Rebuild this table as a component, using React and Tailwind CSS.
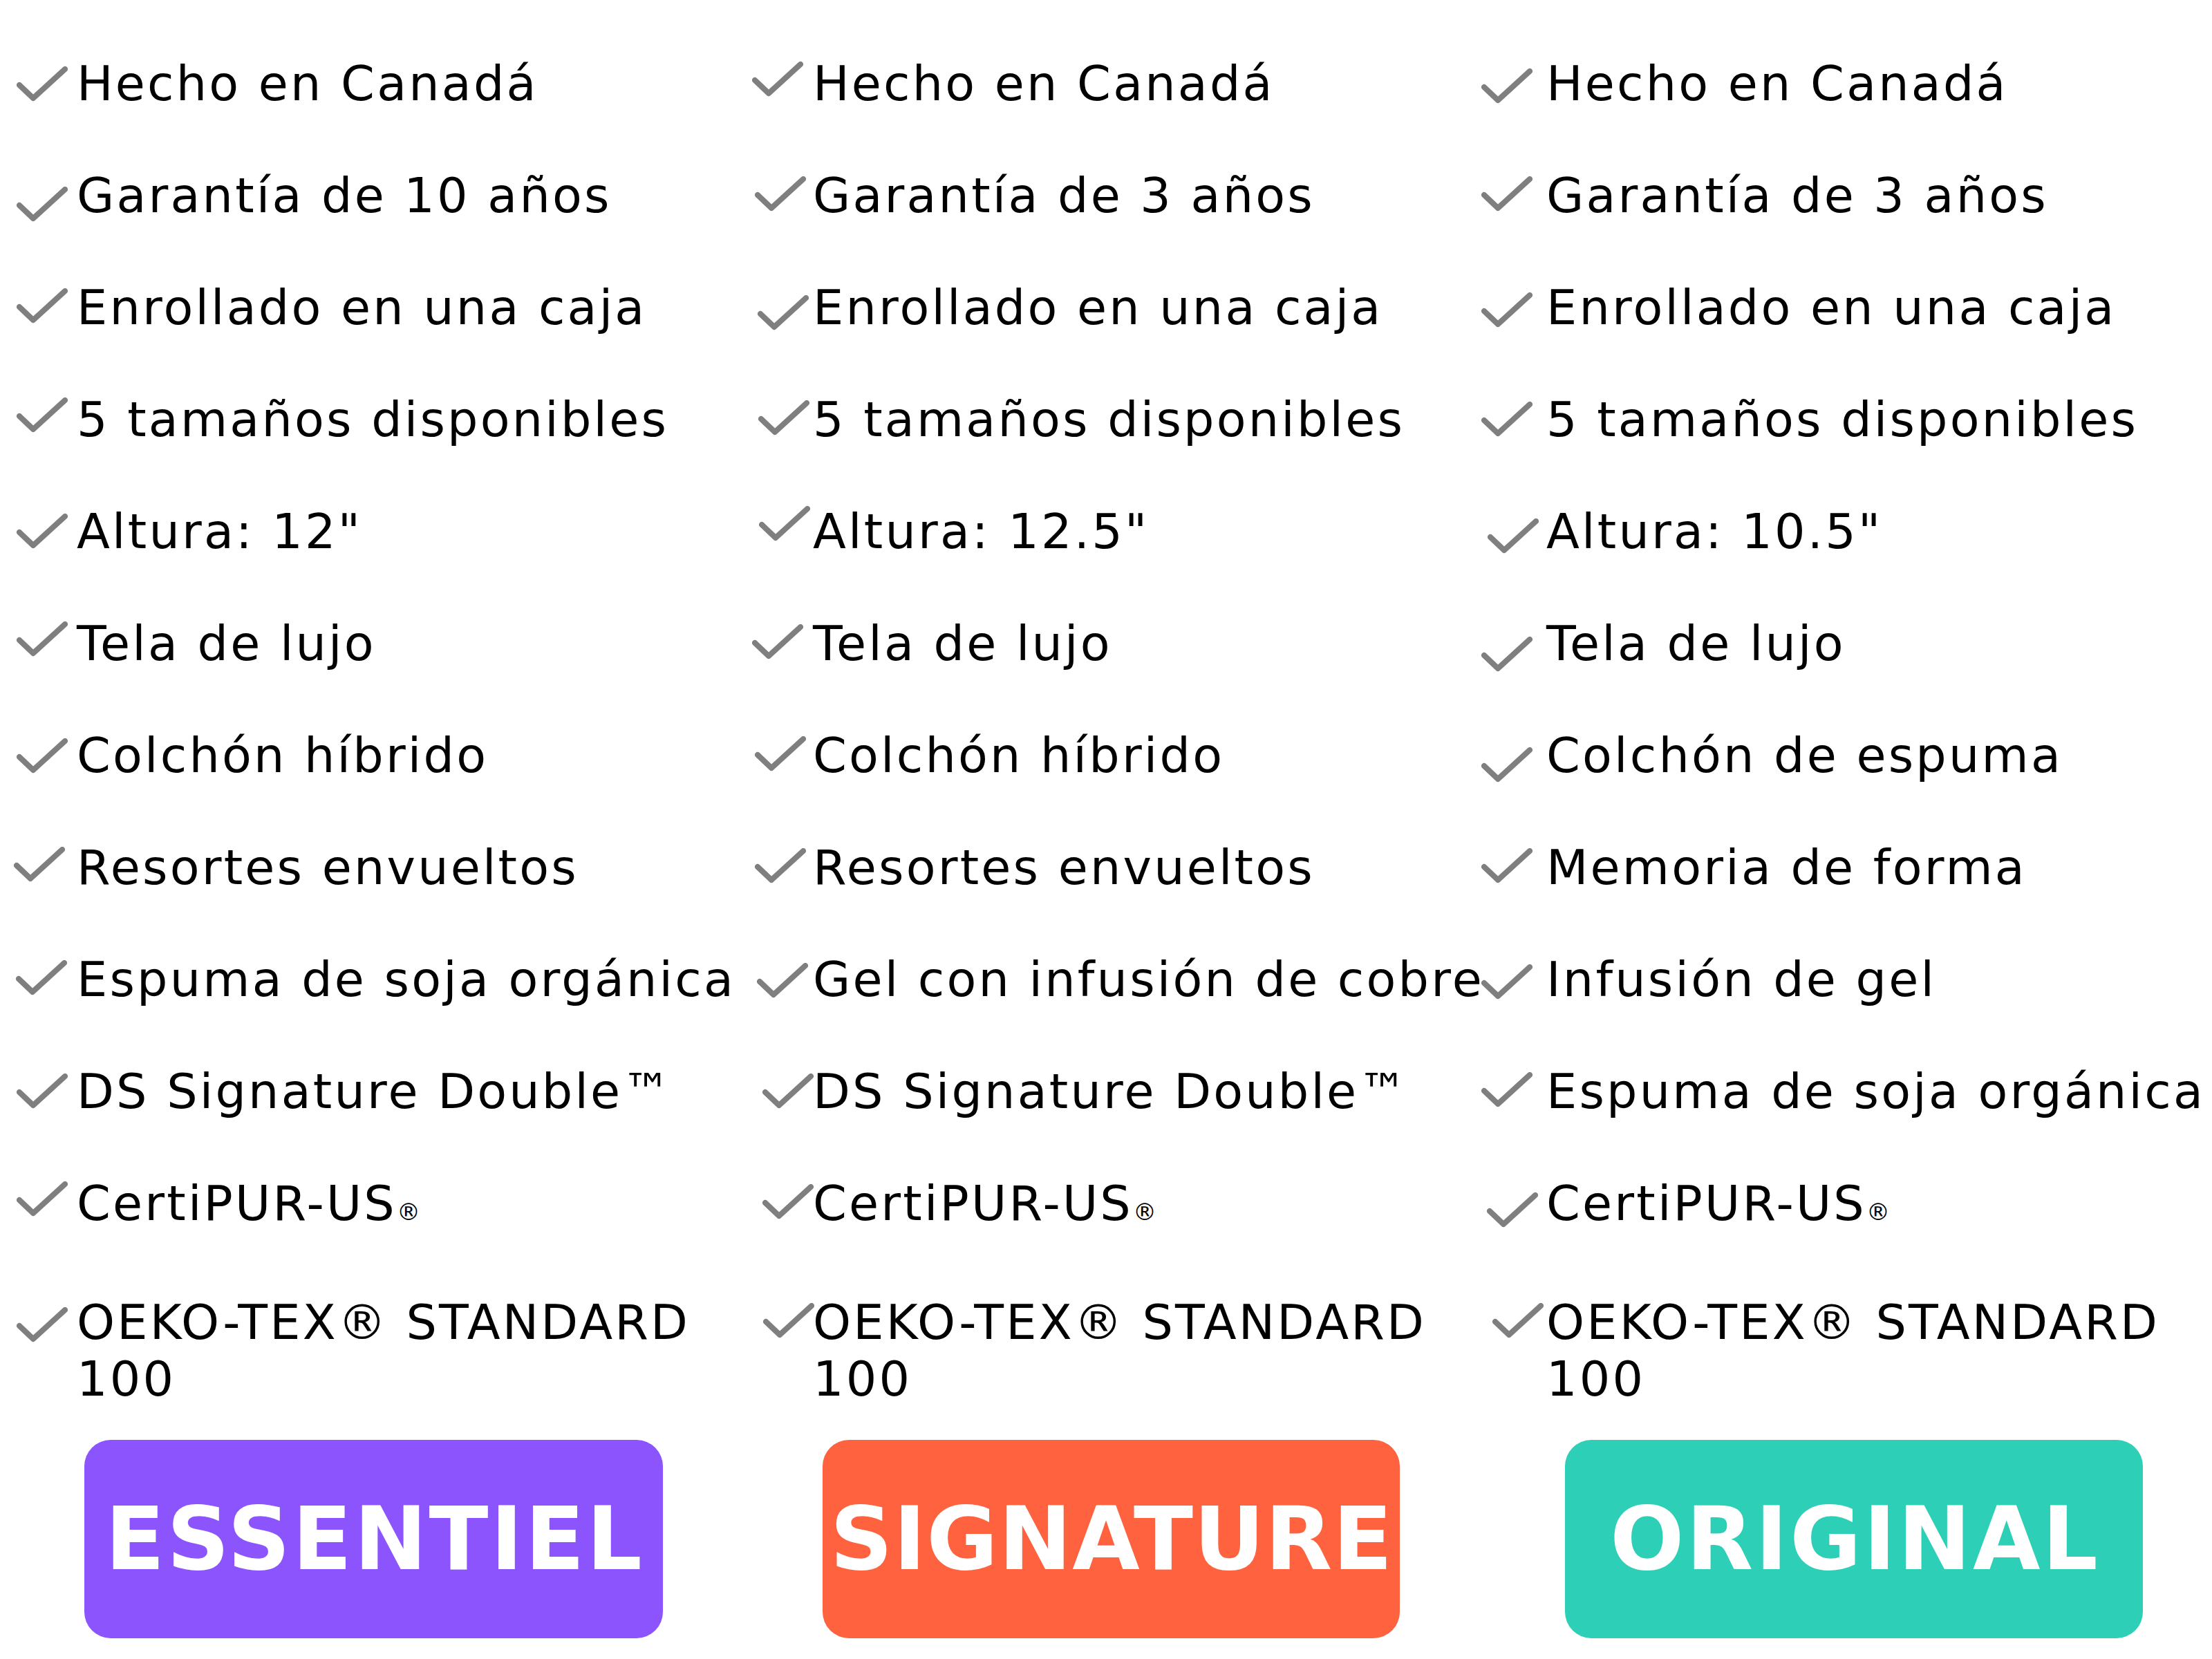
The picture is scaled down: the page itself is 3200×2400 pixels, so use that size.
import React from 'react';

const Check = ({ className }) => (
  <svg
    className={className}
    width="74"
    height="52"
    viewBox="0 0 74 52"
    fill="none"
    stroke="#7f7f7f"
    strokeWidth="8"
    strokeLinecap="round"
    strokeLinejoin="round"
  >
    <polyline points="4,27 24,46 70,4" />
  </svg>
);

const Reg = () => <span className="text-[34px] tracking-normal">®</span>;

const oeko = (
  <>
    OEKO-TEX® STANDARD
    <br />
    100
  </>
);

const columns = [
  {
    width: 'w-[1064px]',
    box: 'w-[87px]',
    items: [
      { t: 'Hecho en Canadá', c: 'mt-[16px]' },
      { t: 'Garantía de 10 años', c: 'mt-[28px]' },
      { t: 'Enrollado en una caja', c: 'mt-[13px]' },
      { t: '5 tamaños disponibles', c: 'mt-[9px]' },
      { t: 'Altura: 12"', c: 'mt-[15px]' },
      { t: 'Tela de lujo', c: 'mt-[9px]' },
      { t: 'Colchón híbrido', c: 'mt-[16px]' },
      { t: 'Resortes envueltos', c: 'mt-[11px] -ml-[4px]' },
      { t: 'Espuma de soja orgánica', c: 'mt-[13px] -ml-[1px]' },
      { t: 'DS Signature Double™', c: 'mt-[15px]' },
      { t: <>CertiPUR-US<Reg /></>, c: 'mt-[9px]' },
      { t: oeko, c: 'mt-[19px]' },
    ],
  },
  {
    width: 'w-[1055px]',
    box: 'w-[88px]',
    items: [
      { t: 'Hecho en Canadá', c: 'mt-[9px]' },
      { t: 'Garantía de 3 años', c: 'mt-[13px] ml-[4px]' },
      { t: 'Enrollado en una caja', c: 'mt-[23px] ml-[8px]' },
      { t: '5 tamaños disponibles', c: 'mt-[13px] ml-[9px]' },
      { t: 'Altura: 12.5"', c: 'mt-[4px] ml-[10px]' },
      { t: 'Tela de lujo', c: 'mt-[13px]' },
      { t: 'Colchón híbrido', c: 'mt-[13px] ml-[4px]' },
      { t: 'Resortes envueltos', c: 'mt-[13px] ml-[4px]' },
      { t: 'Gel con infusión de cobre', c: 'mt-[17px] ml-[7px]' },
      { t: 'DS Signature Double™', c: 'mt-[15px] ml-[15px]' },
      { t: <>CertiPUR-US<Reg /></>, c: 'mt-[13px] ml-[15px]' },
      { t: oeko, c: 'mt-[13px] ml-[16px]' },
    ],
  },
  {
    width: 'w-[1000px]',
    box: 'w-[94px]',
    items: [
      { t: 'Hecho en Canadá', c: 'mt-[19px]' },
      { t: 'Garantía de 3 años', c: 'mt-[13px]' },
      { t: 'Enrollado en una caja', c: 'mt-[19px]' },
      { t: '5 tamaños disponibles', c: 'mt-[15px]' },
      { t: 'Altura: 10.5"', c: 'mt-[22px] ml-[9px]' },
      { t: 'Tela de lujo', c: 'mt-[31px]' },
      { t: 'Colchón de espuma', c: 'mt-[29px]' },
      { t: 'Memoria de forma', c: 'mt-[13px]' },
      { t: 'Infusión de gel', c: 'mt-[19px]' },
      { t: 'Espuma de soja orgánica', c: 'mt-[13px]' },
      { t: <>CertiPUR-US<Reg /></>, c: 'mt-[25px] ml-[8px]' },
      { t: oeko, c: 'mt-[13px] ml-[16px]' },
    ],
  },
];

const buttons = [
  { label: 'ESSENTIEL', cls: 'ml-[122px] w-[837px] bg-[#8c54fd]', tr: 'tracking-[3px] pl-[3px]' },
  { label: 'SIGNATURE', cls: 'ml-[231px] w-[835px] bg-[#fe623f]', tr: 'tracking-[1px] pl-[1px]' },
  { label: 'ORIGINAL', cls: 'ml-[239px] w-[836px] bg-[#2ecfb7]', tr: 'tracking-[3px] pl-[3px]' },
];

const rowHeight = (i) => (i === 10 ? 'h-[172px]' : i === 11 ? '' : 'h-[162px]');

export default function App() {
  return (
    <div className="w-[3200px] h-[2400px] bg-white overflow-hidden text-black font-['DejaVu_Sans',sans-serif]">
      <div className="flex pl-[24px] pt-[80px]">
        {columns.map((col, ci) => (
          <div key={ci} className={`${col.width} shrink-0 flex flex-col`}>
            {col.items.map((item, i) => (
              <div key={i} className={`flex items-start ${rowHeight(i)}`}>
                <div className={`${col.box} shrink-0`}>
                  <Check className={item.c} />
                </div>
                <div className="text-[70px] leading-[82px] tracking-[3.2px] whitespace-nowrap">{item.t}</div>
              </div>
            ))}
          </div>
        ))}
      </div>
      <div className="flex mt-[47px]">
        {buttons.map((b) => (
          <div
            key={b.label}
            className={`${b.cls} h-[287px] shrink-0 rounded-[38px] flex items-center justify-center`}
          >
            <span className={`text-white text-[126px] leading-none font-bold ${b.tr}`}>{b.label}</span>
          </div>
        ))}
      </div>
    </div>
  );
}
